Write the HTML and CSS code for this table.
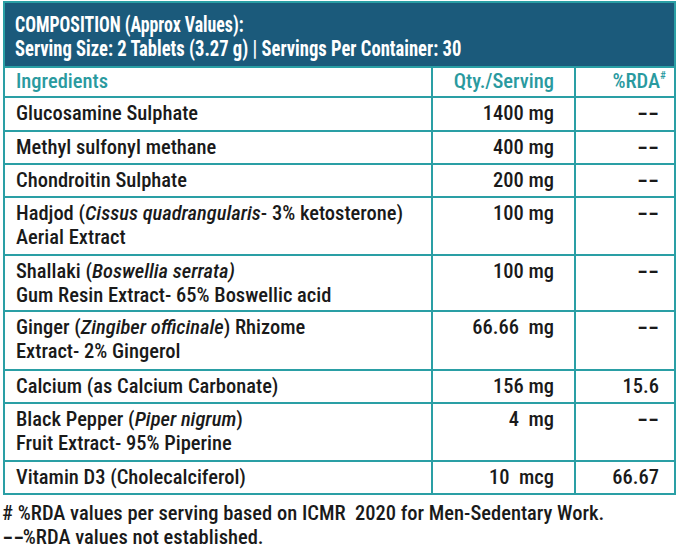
FILE: index.html
```html
<!DOCTYPE html>
<html>
<head>
<meta charset="utf-8">
<link rel="stylesheet" href="styles.css">
</head>
<body>
<div class="card">
  <div class="head">
    <div class="head-line l1">COMPOSITION (Approx Values):</div>
    <div class="head-line l2">Serving Size: 2 Tablets (3.27 g) | Servings Per Container: 30</div>
  </div>
  <table class="comp">
    <colgroup><col class="c1"><col class="c2"><col class="c3"></colgroup>
    <tr class="th">
      <td>Ingredients</td><td class="num">Qty./Serving</td><td class="rda">%RDA<sup>#</sup></td>
    </tr>
    <tr class="one first"><td>Glucosamine Sulphate</td><td class="num">1400 mg</td><td class="rda"><span class="dash">--</span></td></tr>
    <tr class="one"><td>Methyl sulfonyl methane</td><td class="num">400 mg</td><td class="rda"><span class="dash">--</span></td></tr>
    <tr class="one"><td>Chondroitin Sulphate</td><td class="num">200 mg</td><td class="rda"><span class="dash">--</span></td></tr>
    <tr class="two a"><td>Hadjod (<i>Cissus quadrangularis</i>- 3% ketosterone)<br>Aerial Extract</td><td class="num">100 mg</td><td class="rda"><span class="dash">--</span></td></tr>
    <tr class="two b"><td>Shallaki (<i>Boswellia serrata)</i><br>Gum Resin Extract- 65% Boswellic acid</td><td class="num">100 mg</td><td class="rda"><span class="dash">--</span></td></tr>
    <tr class="two c"><td>Ginger (<i>Zingiber officinale</i>) Rhizome<br>Extract- 2% Gingerol</td><td class="num">66.66&nbsp; mg</td><td class="rda"><span class="dash">--</span></td></tr>
    <tr class="one"><td>Calcium (as Calcium Carbonate)</td><td class="num">156 mg</td><td class="rda">15.6</td></tr>
    <tr class="two a"><td>Black Pepper (<i>Piper nigrum</i>)<br>Fruit Extract- 95% Piperine</td><td class="num">4&nbsp; mg</td><td class="rda"><span class="dash">--</span></td></tr>
    <tr class="one"><td>Vitamin D3 (Cholecalciferol)</td><td class="num">10&nbsp; mcg</td><td class="rda">66.67</td></tr>
  </table>
</div>
<div class="notes">
  <div># %RDA values per serving based on ICMR&nbsp; 2020 for Men-Sedentary Work.</div>
  <div><span class="dash small">--</span>%RDA values not established.</div>
</div>
</body>
</html>
```

FILE: styles.css
```css
html, body {
  margin: 0;
  padding: 0;
  background: #ffffff;
}
body {
  font-family: "Roboto", "DejaVu Sans Condensed", sans-serif;
  font-stretch: condensed;
  font-weight: 500;
  color: #1a1a1a;
  width: 679px;
  padding-top: 1px;
}
.card {
  margin-left: 3px;
  width: 669px;
  border: 2px solid #2a9fa5;
  border-bottom: none;
}
.head {
  background: #1b5a7b;
  color: #ffffff;
  font-weight: bold;
  font-size: 22px;
  line-height: 24px;
  padding: 10px 10px 5px 10px;
  height: 48px;
  white-space: nowrap;
}
.head-line {
  transform-origin: left center;
}
.l1 { transform: scaleX(0.81); }
.l2 { transform: scaleX(0.845); }
.comp {
  width: 100%;
  border-collapse: collapse;
  table-layout: fixed;
  font-size: 20.5px;
}
.c1 { width: 427px; }
.c2 { width: 143px; }
.c3 { width: 99px; }
.comp td {
  border: 2px solid #2a9fa5;
  padding: 3px 10px 3px 11px;
  line-height: 24px;
  vertical-align: top;
  white-space: nowrap;
}
.comp tr td:first-child { border-left: none; }
.comp tr td:last-child { border-right: none; }
.comp .th td {
  color: #2a9a9f;
  padding-top: 1px;
  padding-bottom: 3px;
}
.comp .num {
  text-align: right;
  padding-right: 20px;
}
.comp .rda {
  text-align: right;
  padding-right: 15px;
}
.comp .th .rda { padding-right: 8px; }
.comp sup {
  font-size: 11px;
  line-height: 0;
  vertical-align: 9px;
}
.dash {
  display: inline-block;
  font-weight: bold;
  letter-spacing: -0.5px;
  transform: scaleX(1.6);
  transform-origin: right center;
}
.dash.small {
  transform-origin: left center;
  margin-right: 7px;
}
.one td { height: 25px; }
.one.first td { height: 26px; }
.two.a td { height: 50px; }
.two.b td { height: 46px; }
.two.c td { height: 51px; }
.notes {
  font-size: 20.5px;
  line-height: 24px;
  padding-left: 2px;
  padding-top: 6px;
}
```
